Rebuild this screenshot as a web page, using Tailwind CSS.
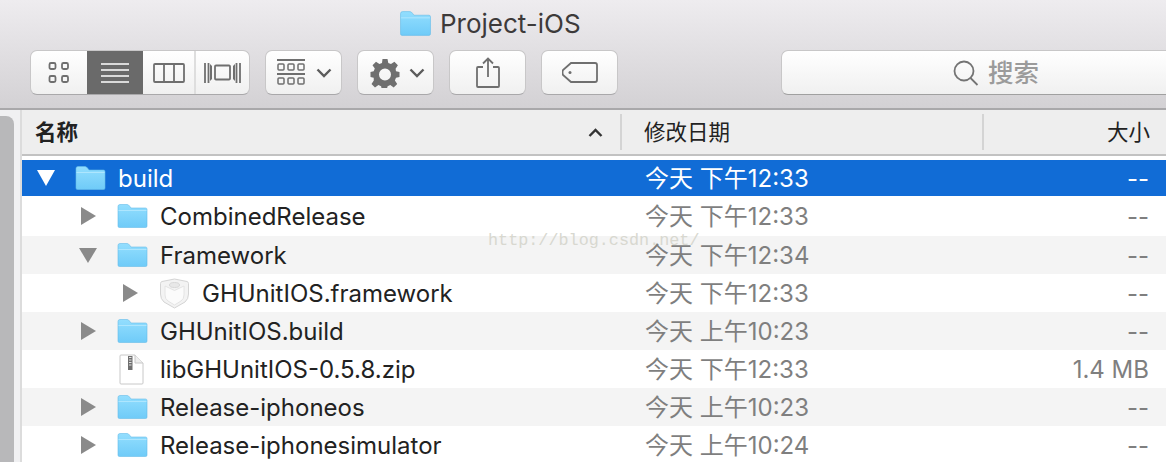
<!DOCTYPE html>
<html lang="en">
<head>
<meta charset="UTF-8">
<title>Project-iOS</title>
<script src="https://cdn.jsdelivr.net/npm/@tailwindcss/browser@4"></script>
</head>
<body class="w-[1166px] h-[462px] overflow-hidden bg-white relative font-['Inter','Noto_Sans_CJK_SC',sans-serif]">

<svg class="absolute w-0 h-0">
  <defs>
    <linearGradient id="fold" x1="0" y1="0" x2="0" y2="1"><stop offset="0" stop-color="#93defe"/><stop offset="1" stop-color="#6fcbf8"/></linearGradient>
    <symbol id="folder" viewBox="0 0 30 24">
      <path d="M.5 22V2.500q0-2 2-2h7q1.500 0 2.500 1.500l1.500 2H28q1.500 0 1.500 1.500V22q0 1.500-1.500 1.500H2Q.5 23.500.5 22z" fill="url(#fold)" stroke="#67bce9" stroke-width=".6"/>
      <path d="M1 6.500h28" stroke="#aee6fe" stroke-width="1"/>
    </symbol>
  </defs>
</svg>

<!-- toolbar -->
<header class="h-[110px] border-b-2 border-[#a9a8aa] bg-gradient-to-b from-[#eeecef] to-[#d3d1d4]">
  <div class="h-[50px] pl-[400px] flex items-center gap-[9px]">
    <svg class="w-[31px] h-[25px] mb-[4px]"><use href="#folder"/></svg>
    <span class="text-[26px] leading-none text-[#3d3a3a] mb-[3px]">Project-iOS</span>
  </div>
  <div class="flex pl-[30px] h-[45px]">
    <!-- view switcher -->
    <div class="flex w-[220px] h-[45px] rounded-[7px] border border-[#c8c7c8] border-b-[#a9a8aa] bg-gradient-to-b from-white to-[#f0f0f0] overflow-hidden">
      <div class="w-[56px] flex items-center justify-center">
        <svg width="24" height="24" fill="none" stroke="#6f6f6f" stroke-width="1.800"><rect x="2.500" y="2" width="6" height="6" rx="1.500"/><rect x="15" y="2" width="6" height="6" rx="1.500"/><rect x="2.500" y="15" width="6" height="6" rx="1.500"/><rect x="15" y="15" width="6" height="6" rx="1.500"/></svg>
      </div>
      <div class="w-[56px] bg-[#6a6a6a] flex items-center justify-center">
        <svg width="28" height="22" stroke="#fff" stroke-width="1.600"><path d="M0 2h28M0 8h28M0 14h28M0 20h28"/></svg>
      </div>
      <div class="w-[53px] flex items-center justify-center border-r-2 border-[#dedede]">
        <svg width="32" height="20" fill="none" stroke="#6f6f6f" stroke-width="1.800"><rect x="1" y="1" width="30" height="18" rx="1"/><path d="M11 1v18M21 1v18"/></svg>
      </div>
      <div class="flex-1 flex items-center justify-center">
        <svg width="37" height="22" fill="none" stroke="#6f6f6f" stroke-width="1.800"><rect x="11" y="3.500" width="15" height="14" rx="1"/><path d="M1 1v20M4.500 1v20M36 1v20M32.500 1v20"/><path d="M8 4v13l-2 2V2zM29 4v13l2 2V2z" fill="#6f6f6f" stroke="none"/></svg>
      </div>
    </div>
    <!-- arrange -->
    <div class="ml-[15px] w-[77px] h-[45px] rounded-[7px] border border-[#c8c7c8] border-b-[#a9a8aa] bg-gradient-to-b from-white to-[#f0f0f0] flex items-center pl-[11px] gap-[10px]">
      <svg width="29" height="27" fill="none" stroke="#6f6f6f" stroke-width="1.500"><path d="M0 1h28M0 15h28" stroke-width="1.800"/><rect x="1" y="5" width="6" height="6" rx="1"/><rect x="11" y="5" width="6" height="6" rx="1"/><rect x="21" y="5" width="6" height="6" rx="1"/><rect x="1" y="19" width="6" height="6" rx="1"/><rect x="11" y="19" width="6" height="6" rx="1"/><rect x="21" y="19" width="6" height="6" rx="1"/></svg>
      <svg width="16" height="10" fill="none" stroke="#5c5c5c" stroke-width="2.400"><path d="M1.500 1.500L8 8l6.500-6.500"/></svg>
    </div>
    <!-- action -->
    <div class="ml-[15px] w-[77px] h-[45px] rounded-[7px] border border-[#c8c7c8] border-b-[#a9a8aa] bg-gradient-to-b from-white to-[#f0f0f0] flex items-center pl-[12px] gap-[9px]">
      <svg width="30" height="30" viewBox="0 0 30 30" fill="#6f6f6f"><path fill-rule="evenodd" d="M12.500 1h5l.8 4 2.700 1.100 3.400-2.300 3.500 3.500-2.300 3.400L26 13.300l3.500.8v4.900l-3.500.8-1.100 2.700 2.300 3.400-3.500 3.500-3.400-2.300-2.700 1.100-.8 3.500h-5l-.7-3.500-2.700-1.100-3.400 2.300-3.500-3.500 2.300-3.400L3.700 19.800 0.500 19v-4.900l3.200-.8 1.100-2.700-2.300-3.400 3.500-3.500 3.400 2.300L12 5zM15 10.500a6 6 0 1 0 0 12 6 6 0 0 0 0-12z"/></svg>
      <svg width="16" height="10" fill="none" stroke="#5c5c5c" stroke-width="2.400"><path d="M1.500 1.500L8 8l6.500-6.500"/></svg>
    </div>
    <!-- share -->
    <div class="ml-[15px] w-[77px] h-[45px] rounded-[7px] border border-[#c8c7c8] border-b-[#a9a8aa] bg-gradient-to-b from-white to-[#f0f0f0] flex items-center justify-center">
      <svg width="24" height="31" fill="none" stroke="#6f6f6f" stroke-width="1.800"><path d="M7 10H2q-1 0-1 1v18q0 1 1 1h20q1 0 1-1V11q0-1-1-1h-5"/><path d="M12 20V1.500M7 6.500l5-5 5 5"/></svg>
    </div>
    <!-- tag -->
    <div class="ml-[15px] w-[77px] h-[45px] rounded-[7px] border border-[#c8c7c8] border-b-[#a9a8aa] bg-gradient-to-b from-white to-[#f0f0f0] flex items-center justify-center">
      <svg width="36" height="21" fill="none" stroke="#6f6f6f" stroke-width="1.800"><path d="M9 1h24q2 0 2 2v15q0 2-2 2H9l-8-7q-1-2.500 0-5z"/><circle cx="8" cy="10.500" r="1.500" fill="#6f6f6f" stroke="none"/></svg>
    </div>
    <!-- search -->
    <div class="ml-[163px] flex-1 h-[45px] rounded-l-[7px] border border-r-0 border-[#c8c7c8] border-b-[#a0a0a0] bg-gradient-to-b from-white to-[#f0f0f0] flex items-center pl-[171px] gap-[9px]">
      <svg width="26" height="26" fill="none" stroke="#747474" stroke-width="1.800"><circle cx="11" cy="11" r="9.500"/><path d="M17.500 18l7 7"/></svg>
      <span class="text-[25.500px] leading-none text-[#9b9b9b] font-medium">搜索</span>
    </div>
  </div>
</header>

<div class="flex h-[352px]">
  <!-- sidebar edge with scrollbar -->
  <div class="w-[22px] shrink-0 bg-[#f0f0f2] border-r-2 border-[#dcdcdc] pt-[6px]">
    <div class="w-[14px] h-full rounded-tr-[8px] bg-[#b8b8ba]"></div>
  </div>

  <main class="flex-1 min-w-0">
    <!-- column headers -->
    <div class="h-[46px] flex items-center bg-[#eeeeee] border-b-2 border-[#c2c2c2] text-[21.500px] text-[#222]">
      <div class="w-[600px] h-[36px] flex items-center justify-between pl-[13px] pr-[17px] border-r-2 border-[#d4d4d4]">
        <span class="font-bold">名称</span>
        <svg width="15" height="9" fill="none" stroke="#333" stroke-width="2.400"><path d="M1.500 8L7.500 2l6 6"/></svg>
      </div>
      <div class="w-[362px] h-[36px] flex items-center pl-[22px] border-r-2 border-[#d4d4d4]">修改日期</div>
      <div class="flex-1 text-right pr-[16px]">大小</div>
    </div>

    <!-- rows -->
    <div class="pt-[4px] text-[24px] text-[#222]">
      <div class="h-[36px] flex items-center bg-[#116cd6] text-white">
        <svg class="ml-[15px]" width="18" height="16" fill="#fff"><path d="M0 0h18L9 16z"/></svg>
        <svg class="ml-[20px] w-[31px] h-[24px]"><use href="#folder"/></svg>
        <span class="ml-[12px] w-[527px] pt-[2px]">build</span>
        <span class="w-[300px] pt-[2px]">今天 下午12:33</span>
        <span class="flex-1 text-right pr-[17px] pt-[2px]">--</span>
      </div>
      <div class="h-[40px] flex items-center">
        <svg class="ml-[59px]" width="15" height="18" fill="#8a8a8a"><path d="M0 0l15 9L0 18z"/></svg>
        <svg class="ml-[21px] w-[31px] h-[24px]"><use href="#folder"/></svg>
        <span class="ml-[12px] w-[485px] pt-[2px]">CombinedRelease</span>
        <span class="w-[300px] pt-[2px] text-[#7f7f7f]">今天 下午12:33</span>
        <span class="flex-1 text-right pr-[17px] pt-[2px] text-[#7f7f7f]">--</span>
      </div>
      <div class="h-[38px] flex items-center bg-[#f4f4f4]">
        <svg class="ml-[57px]" width="18" height="15" fill="#8a8a8a"><path d="M0 0h18L9 15z"/></svg>
        <svg class="ml-[20px] w-[31px] h-[24px]"><use href="#folder"/></svg>
        <span class="ml-[12px] w-[485px] pt-[2px]">Framework</span>
        <span class="w-[300px] pt-[2px] text-[#7f7f7f]">今天 下午12:34</span>
        <span class="flex-1 text-right pr-[17px] pt-[2px] text-[#7f7f7f]">--</span>
      </div>
      <div class="h-[38px] flex items-center">
        <svg class="ml-[101px]" width="15" height="18" fill="#8a8a8a"><path d="M0 0l15 9L0 18z"/></svg>
        <svg class="ml-[21px]" width="31" height="31" viewBox="0 0 31 31"><path d="M15.500 1L28 3.500q1.500 .5 1.500 2V16q0 5-3.500 8l-10.500 6L5 24q-3.500-3-3.500-8V5.500q0-1.500 1.500-2z" fill="#f3f3f3" stroke="#d4d4d4"/><path d="M6 8l9.500 4.500L25 8v9q0 4-3 6l-6.500 4-6.500-4q-3-2-3-6z" fill="#fbfbfb" stroke="#e4e4e4"/><ellipse cx="15.500" cy="7" rx="5" ry="2.500" fill="#e8e8e8" stroke="#d8d8d8"/></svg>
        <span class="ml-[12px] w-[443px] pt-[2px]">GHUnitIOS.framework</span>
        <span class="w-[300px] pt-[2px] text-[#7f7f7f]">今天 下午12:33</span>
        <span class="flex-1 text-right pr-[17px] pt-[2px] text-[#7f7f7f]">--</span>
      </div>
      <div class="h-[38px] flex items-center bg-[#f4f4f4]">
        <svg class="ml-[59px]" width="15" height="18" fill="#8a8a8a"><path d="M0 0l15 9L0 18z"/></svg>
        <svg class="ml-[21px] w-[31px] h-[24px]"><use href="#folder"/></svg>
        <span class="ml-[12px] w-[485px] pt-[2px]">GHUnitIOS.build</span>
        <span class="w-[300px] pt-[2px] text-[#7f7f7f]">今天 上午10:23</span>
        <span class="flex-1 text-right pr-[17px] pt-[2px] text-[#7f7f7f]">--</span>
      </div>
      <div class="h-[38px] flex items-center">
        <svg class="ml-[97px]" width="25" height="31" viewBox="0 0 25 31"><path d="M1 2q0-1 1-1h14l8 8v20q0 1-1 1H2q-1 0-1-1z" fill="#fff" stroke="#c8c8c8"/><path d="M16 1v8h8" fill="#eee" stroke="#c8c8c8"/><path d="M9 2h4.500v14H9z" fill="#6f6f6f"/><path d="M10 3.500h2.500M10 6h2.500M10 8.500h2.500M10 11h2.500" stroke="#fff" stroke-width=".8"/></svg>
        <span class="ml-[16px] w-[485px] pt-[2px]">libGHUnitIOS-0.5.8.zip</span>
        <span class="w-[300px] pt-[2px] text-[#7f7f7f]">今天 下午12:33</span>
        <span class="flex-1 text-right pr-[17px] pt-[2px] text-[#7f7f7f]">1.4 MB</span>
      </div>
      <div class="h-[38px] flex items-center bg-[#f4f4f4]">
        <svg class="ml-[59px]" width="15" height="18" fill="#8a8a8a"><path d="M0 0l15 9L0 18z"/></svg>
        <svg class="ml-[21px] w-[31px] h-[24px]"><use href="#folder"/></svg>
        <span class="ml-[12px] w-[485px] pt-[2px]">Release-iphoneos</span>
        <span class="w-[300px] pt-[2px] text-[#7f7f7f]">今天 上午10:23</span>
        <span class="flex-1 text-right pr-[17px] pt-[2px] text-[#7f7f7f]">--</span>
      </div>
      <div class="h-[38px] flex items-center">
        <svg class="ml-[59px]" width="15" height="18" fill="#8a8a8a"><path d="M0 0l15 9L0 18z"/></svg>
        <svg class="ml-[21px] w-[31px] h-[24px]"><use href="#folder"/></svg>
        <span class="ml-[12px] w-[485px] pt-[2px]">Release-iphonesimulator</span>
        <span class="w-[300px] pt-[2px] text-[#7f7f7f]">今天 上午10:24</span>
        <span class="flex-1 text-right pr-[17px] pt-[2px] text-[#7f7f7f]">--</span>
      </div>
    </div>
  </main>
</div>

<!-- watermark over the list -->
<div class="absolute left-[488px] top-[233px] text-[16.800px] leading-none font-['Liberation_Mono',monospace] text-[#d8d8d0]">http://blog.csdn.net/</div>
</body>
</html>
